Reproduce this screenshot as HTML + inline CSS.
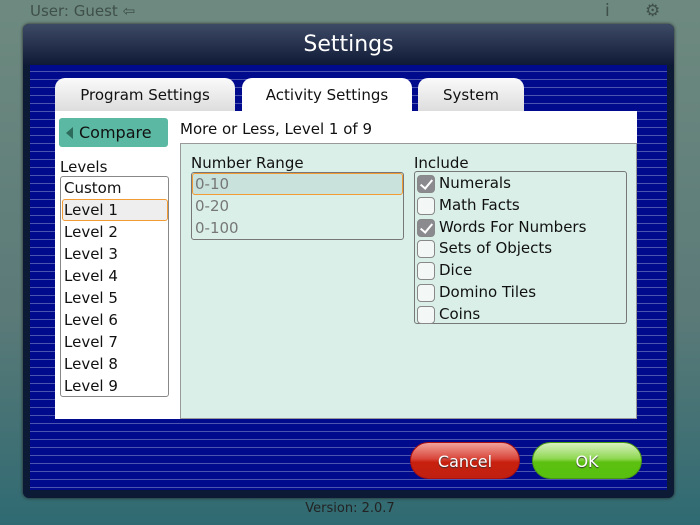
<!DOCTYPE html><html><head><style>
*{margin:0;padding:0;box-sizing:border-box}
body{width:700px;height:525px;overflow:hidden;position:relative;font-family:"DejaVu Sans","Liberation Sans",sans-serif;background:linear-gradient(180deg,#6e8a80 0%,#5b7a78 60%,#2f6a72 100%)}
.abs{position:absolute}
.dlg{left:23px;top:24px;width:651px;height:474px;background:#0d1a35;border-radius:6px;box-shadow:0 0 3px #222}
.title{left:23px;top:24px;width:651px;height:41px;border-radius:6px 6px 0 0;background:linear-gradient(#3d4a66,#0f1a36);color:#fff;font-size:22px;text-align:center;line-height:41px}
.blue{left:30px;top:65px;width:637px;height:425px;background:repeating-linear-gradient(180deg,#000a8c 0px,#000a8c 6px,#4b55b0 6px,#4b55b0 7px,#000a8c 7px,#000a8c 8px)}
.tab{top:78px;height:34px;border-radius:10px 10px 0 0;background:linear-gradient(#fafafa,#dcdcdc);font-size:15px;text-align:center;line-height:34px;color:#111}
.panel{left:55px;top:111px;width:582px;height:308px;background:#fff}
.cmp{left:59px;top:118px;width:109px;height:29px;background:#5bb8a2;border-radius:3px;font-size:16px;line-height:29px;padding-left:20px;color:#111}
.list{left:60px;top:176px;width:109px;height:221px;border:1px solid #888;border-radius:3px;background:#fff}
.row{position:absolute;left:3px;font-size:15px;color:#111}
.rp{left:180px;top:143px;width:457px;height:276px;background:#d9efe8;border:1px solid #999}
.box{border:1px solid #777;border-radius:3px}
.cb{position:absolute;left:2px;width:18px;height:18px;border:1px solid #888;border-radius:4px;background:#f3f8f6}
.cb.on{background:#8b8b8f}
.cb.on:after{content:"";position:absolute;left:5px;top:1px;width:5px;height:10px;border:solid #fff;border-width:0 2px 2px 0;transform:rotate(40deg)}
.it{position:absolute;left:24px;font-size:15px;color:#111}
.btn{top:442px;width:110px;height:37px;border-radius:19px;color:#fff;font-size:16px;text-align:center;line-height:37px;text-shadow:0 1px 1px #333;overflow:hidden}
</style></head><body>
<div class="abs" style="left:30px;top:2px;font-size:15px;color:#3f4f4a">User: Guest ⇦</div>
<div class="abs" style="left:605px;top:1px;font-size:17px;color:#3f4f4a">i</div>
<div class="abs" style="left:645px;top:1px;font-size:17px;color:#3f4f4a">⚙</div>
<div class="abs dlg"></div>
<div class="abs title">Settings</div>
<div class="abs blue"></div>
<div class="abs tab" style="left:55px;width:180px">Program Settings</div>
<div class="abs tab" style="left:242px;width:170px;background:#fff;height:36px">Activity Settings</div>
<div class="abs tab" style="left:418px;width:106px">System</div>
<div class="abs panel"></div>
<div class="abs cmp"><span style="position:absolute;left:7px;top:9px;border-right:7px solid #2d6b5c;border-top:6px solid transparent;border-bottom:6px solid transparent"></span>Compare</div>
<div class="abs" style="left:180px;top:120px;font-size:15px;color:#111">More or Less, Level 1 of 9</div>
<div class="abs" style="left:60px;top:158px;font-size:15px;color:#111">Levels</div>
<div class="abs list">
<div class="row" style="top:2px">Custom</div>
<div style="position:absolute;left:1px;top:22px;width:106px;height:22px;border:1.5px solid #f29a33;border-radius:3px;background:#eee"></div>
<div class="row" style="top:24px">Level 1</div>
<div class="row" style="top:46px">Level 2</div>
<div class="row" style="top:68px">Level 3</div>
<div class="row" style="top:90px">Level 4</div>
<div class="row" style="top:112px">Level 5</div>
<div class="row" style="top:134px">Level 6</div>
<div class="row" style="top:156px">Level 7</div>
<div class="row" style="top:178px">Level 8</div>
<div class="row" style="top:200px">Level 9</div>
</div>
<div class="abs rp"></div>
<div class="abs" style="left:191px;top:154px;font-size:15px;color:#111">Number Range</div>
<div class="abs box" style="left:191px;top:172px;width:213px;height:68px">
<div style="position:absolute;left:0;top:0;width:211px;height:22px;border:1.5px solid #f29a33;border-radius:3px;background:#c9e2dc"></div>
<div style="position:absolute;left:3px;top:2px;font-size:15px;color:#777">0-10</div>
<div style="position:absolute;left:3px;top:24px;font-size:15px;color:#777">0-20</div>
<div style="position:absolute;left:3px;top:46px;font-size:15px;color:#777">0-100</div>
</div>
<div class="abs" style="left:414px;top:154px;font-size:15px;color:#111">Include</div>
<div class="abs box" style="left:414px;top:171px;width:213px;height:153px">
<div class="cb on" style="top:3px"></div><div class="it" style="top:2px">Numerals</div>
<div class="cb" style="top:25px"></div><div class="it" style="top:24px">Math Facts</div>
<div class="cb on" style="top:47px"></div><div class="it" style="top:46px">Words For Numbers</div>
<div class="cb" style="top:68px"></div><div class="it" style="top:67px">Sets of Objects</div>
<div class="cb" style="top:90px"></div><div class="it" style="top:89px">Dice</div>
<div class="cb" style="top:112px"></div><div class="it" style="top:111px">Domino Tiles</div>
<div class="cb" style="top:134px"></div><div class="it" style="top:133px">Coins</div>
</div>
<div class="abs btn" style="left:410px;background:linear-gradient(#f0a29a 0%,#d9463a 45%,#c8200f 55%,#c02010 100%);border:1px solid #a11">Cancel</div>
<div class="abs btn" style="left:532px;background:linear-gradient(#d8f0c0 0%,#8fd850 45%,#5cc010 55%,#58c010 100%);border:1px solid #4a9a10">OK</div>
<div class="abs" style="left:0;width:700px;top:501px;text-align:center;font-size:13px;color:#222">Version: 2.0.7</div>
</body></html>
